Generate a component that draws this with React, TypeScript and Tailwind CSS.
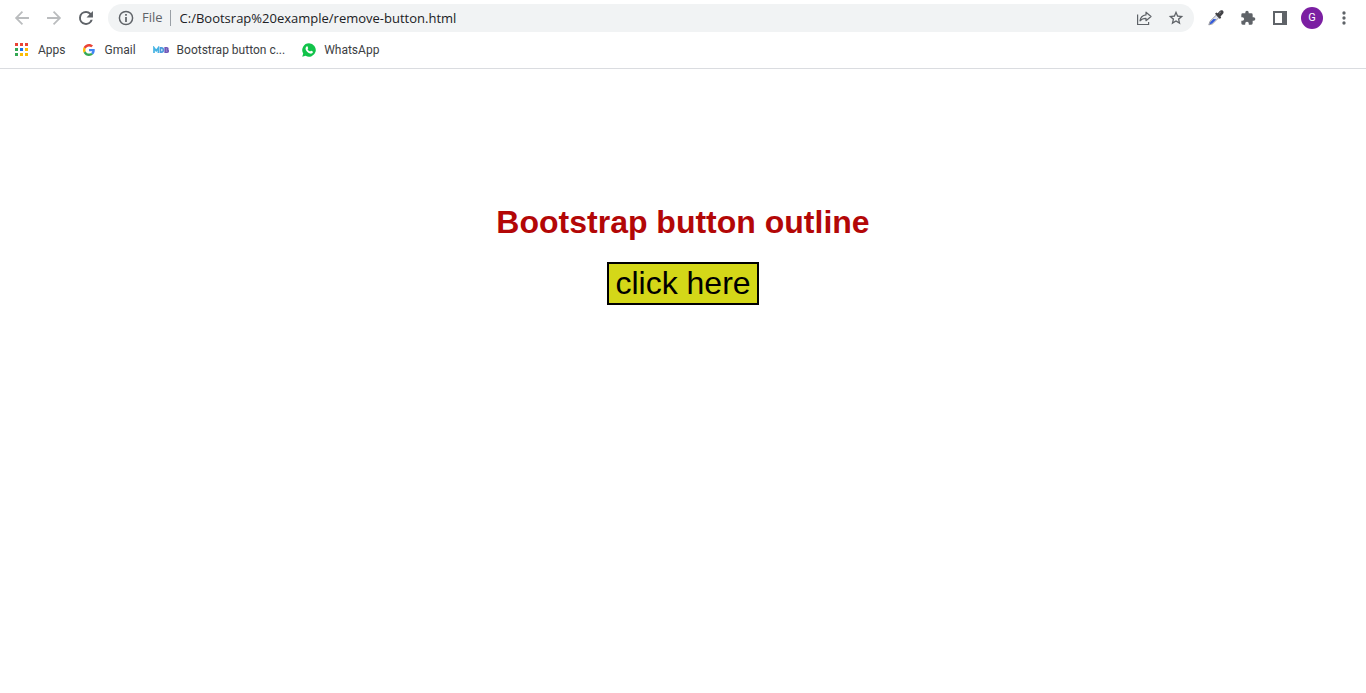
import type { ReactNode } from "react";

const iconButton = "flex h-8 w-8 shrink-0 items-center justify-center";

function Glyph({ d, className, viewBox = "0 0 24 24" }: { d: string; className: string; viewBox?: string }) {
  return (
    <svg viewBox={viewBox} fill="currentColor" className={className} aria-hidden="true">
      <path d={d} />
    </svg>
  );
}

function AppsIcon() {
  const colors = ["#ea4335", "#ea4335", "#ea4335", "#34a853", "#1a73e8", "#fbbc04", "#34a853", "#fbbc04", "#fbbc04"];
  return (
    <svg viewBox="0 0 13 14" className="h-[14px] w-[13px]" aria-hidden="true" shapeRendering="crispEdges">
      {colors.map((fill, i) => (
        <rect key={i} x={(i % 3) * 5} y={Math.floor(i / 3) * 5} width="3" height="3" fill={fill} />
      ))}
    </svg>
  );
}

function GoogleIcon() {
  return (
    <svg viewBox="0 0 48 48" className="h-3 w-3" aria-hidden="true">
      <path fill="#EA4335" d="M24 9.5c3.54 0 6.71 1.22 9.21 3.6l6.85-6.85C35.9 2.38 30.47 0 24 0 14.62 0 6.51 5.38 2.56 13.22l7.98 6.19C12.43 13.72 17.74 9.5 24 9.5z" />
      <path fill="#4285F4" d="M46.98 24.55c0-1.57-.15-3.09-.38-4.55H24v9.02h12.94c-.58 2.96-2.26 5.48-4.78 7.18l7.73 6c4.51-4.18 7.09-10.36 7.09-17.65z" />
      <path fill="#FBBC05" d="M10.53 28.59c-.48-1.45-.76-2.99-.76-4.59s.27-3.14.76-4.59l-7.98-6.19C.92 16.46 0 20.12 0 24c0 3.88.92 7.54 2.56 10.78l7.97-6.19z" />
      <path fill="#34A853" d="M24 48c6.48 0 11.93-2.13 15.89-5.81l-7.73-6c-2.15 1.45-4.92 2.3-8.16 2.3-6.26 0-11.57-4.22-13.47-9.91l-7.98 6.19C6.51 42.62 14.62 48 24 48z" />
    </svg>
  );
}

function MdbIcon() {
  return (
    <svg viewBox="0 0 16 8" className="h-2 w-4" fill="none" strokeWidth="1.7" aria-hidden="true">
      <path stroke="#45b3e3" d="M1 7V1.8l2.2 3 2.2-3V7" />
      <path stroke="#4b9bdc" d="M7.5 1.9h1c2.4 0 2.4 4.2 0 4.2h-1z" />
      <path stroke="#7158b8" d="M12.2 1.9h1.5c1.6 0 1.6 2.1 0 2.1h-1.5 1.7c1.8 0 1.8 2.2 0 2.2h-1.7z" />
    </svg>
  );
}

function WhatsAppIcon() {
  return (
    <svg viewBox="0 0 28 28" className="h-[14px] w-[14px]" aria-hidden="true">
      <path fill="#12c34a" d="M14 .5A13.5 13.5 0 0 0 2.4 20.9L.5 27.5l6.8-1.8A13.5 13.5 0 1 0 14 .5z" />
      <path fill="#fff" d="M9.1 6.8c.7-.7 1.7-.6 2 .2l1.2 2.9c.2.6-.1 1-1.3 2.4 1.2 2.2 2.8 3.7 5.2 4.8 1.3-1.6 1.6-2 2.3-1.7l2.8 1.4c.7.3.6 1.5.2 2.4-.7 1.6-3.1 2.5-5.1 1.9-4.5-1.3-7.2-4-8.8-7.7-.9-2.4-.5-4.6 1.5-6.6z" />
    </svg>
  );
}

function EyedropperIcon() {
  return (
    <svg viewBox="0 0 16 16" className="h-4 w-4" aria-hidden="true">
      <path d="M8.2 5.2 2 11.3.8 14.9l3.8-1.1L10.9 7.6z" fill="#dfe3ee" stroke="#85858b" strokeWidth=".8" />
      <path d="m5.4 8.9 2.9.4-4.2 4.1-2.5.9.8-2.4z" fill="#3158d8" />
      <path d="M7 3.8 8.4 2.6l1.3.7 2-2.4c1.1-1.1 3.4-.8 3.8.8.2.9-.1 1.7-.7 2.4l-2.3 2.3.7 1.2-1.3 1.3z" fill="#424246" />
      <path d="m11.2 3.3 1.6-1.4" stroke="#99999d" />
    </svg>
  );
}

function Bookmark({ icon, label, gap }: { icon: ReactNode; label: string; gap: string }) {
  return (
    <a href="#" className={`flex items-center whitespace-nowrap ${gap}`}>
      {icon}
      <span>{label}</span>
    </a>
  );
}

export default function App() {
  return (
    <div className="min-h-screen bg-white font-['Liberation_Sans',sans-serif]">
      <header className="border-b border-[#dadce0] font-['Open_Sans',sans-serif] text-[#3c4043]">
        <div className="flex h-9 items-center px-[6px] text-[#5f6368]">
          <button aria-label="Back" className={`${iconButton} text-[#babcbe]`}>
            <Glyph viewBox=".5 .5 23 23" className="h-5 w-5" d="M20 10.8H7.83l5.39-5.39L11.8 4l-8 8 8 8 1.41-1.41L7.83 13.2H20z" />
          </button>
          <button aria-label="Forward" className={`${iconButton} text-[#babcbe]`}>
            <Glyph viewBox=".5 .5 23 23" className="h-5 w-5" d="m12.2 4-1.41 1.41 5.38 5.39H4v2.4h12.17l-5.38 5.39L12.2 20l8-8z" />
          </button>
          <button aria-label="Reload" className={iconButton}>
            <Glyph viewBox=".5 .5 23 23" className="h-5 w-5" d="M17.65 6.35A7.96 7.96 0 0 0 12 4a8 8 0 1 0 7.73 10h-2.5A5.7 5.7 0 1 1 12 6.3c1.5 0 2.9.6 3.9 1.7L12.6 11.3H20V4z" />
          </button>
          <div className="ml-[6px] flex h-7 flex-1 items-center rounded-full bg-[#f1f3f4] pr-[2px] pl-[10px] text-[13px]">
            <button aria-label="Site information" className="flex items-center">
              <Glyph className="mr-2 h-4 w-4" d="M10.7 10.5h2.6V18h-2.6zM10.7 6h2.6v2.6h-2.6zM12 1a11 11 0 1 0 0 22 11 11 0 0 0 0-22zm0 19.8a8.8 8.8 0 1 1 0-17.6 8.8 8.8 0 0 1 0 17.6z" />
              <span>File</span>
            </button>
            <span className="mr-[9px] ml-[7px] h-4 w-px bg-[#9aa0a6]" />
            <input
              aria-label="Address"
              defaultValue="C:/Bootsrap%20example/remove-button.html"
              className="min-w-0 flex-1 bg-transparent pt-px text-[#202124] outline-none"
            />
            <button aria-label="Share" className={iconButton}>
              <svg viewBox="0 0 16 16" className="h-4 w-4" fill="none" stroke="currentColor" strokeWidth="1.2" aria-hidden="true">
                <path d="M1.6 4.5v10h11V12" />
                <path d="M10 2.2 15 6.5l-5 4.2V8.3c-2.8 0-4.6.8-6 2.6.4-3.4 2.4-5.6 6-6z" strokeLinejoin="round" />
              </svg>
            </button>
            <button aria-label="Bookmark this page" className={iconButton}>
              <Glyph viewBox="1 1 22 22" className="h-4 w-4" d="m22 9.24-7.19-.62L12 2 9.19 8.63 2 9.24l5.46 4.73L5.82 21 12 17.27 18.18 21l-1.63-7.03zM12 15.1l-3.5 2.1.9-4-3-2.6 4-.4L12 6.5l1.6 3.7 4 .4-3 2.6.9 4z" />
            </button>
          </div>
          <div className="ml-[6px] flex">
            <button aria-label="Color picker" className={iconButton}>
              <EyedropperIcon />
            </button>
            <button aria-label="Extensions" className={iconButton}>
              <Glyph className="h-4 w-4" d="M20.5 11H19V7a2 2 0 0 0-2-2h-4V3.5a2.5 2.5 0 0 0-5 0V5H4a2 2 0 0 0-2 2v3.8h1.5a2.7 2.7 0 0 1 0 5.4H2V20a2 2 0 0 0 2 2h3.8v-1.5a2.7 2.7 0 0 1 5.4 0V22H17a2 2 0 0 0 2-2v-4h1.5a2.5 2.5 0 0 0 0-5z" />
            </button>
            <button aria-label="Side panel" className={iconButton}>
              <svg viewBox="0 0 14 14" className="h-[14px] w-[14px]" fill="currentColor" aria-hidden="true">
                <path fillRule="evenodd" d="M0 0h14v14H0zM2 2v10h7V2z" />
              </svg>
            </button>
            <button aria-label="Profile" className={iconButton}>
              <span className="flex h-[22px] w-[22px] items-center justify-center rounded-full bg-[#7b1fa2] font-['Roboto',sans-serif] text-[11px] text-white">
                G
              </span>
            </button>
            <button aria-label="Menu" className={iconButton}>
              <Glyph className="h-5 w-5" d="M12 8a2 2 0 1 0 0-4 2 2 0 0 0 0 4zm0 2a2 2 0 1 0 0 4 2 2 0 0 0 0-4zm0 6a2 2 0 1 0 0 4 2 2 0 0 0 0-4z" />
            </button>
          </div>
        </div>
        <nav aria-label="Bookmarks" className="flex h-8 items-center gap-[17px] pb-1 pl-[15px] font-['Roboto',sans-serif] text-[12px]">
          <Bookmark icon={<AppsIcon />} label="Apps" gap="gap-[10px]" />
          <Bookmark icon={<GoogleIcon />} label="Gmail" gap="gap-[10px]" />
          <Bookmark icon={<MdbIcon />} label="Bootstrap button c..." gap="gap-2" />
          <Bookmark icon={<WhatsAppIcon />} label="WhatsApp" gap="gap-2" />
        </nav>
      </header>
      <main className="flex flex-col items-center gap-[21px] px-4 pt-[135px] text-[32px] leading-[37px]">
        <h1 className="font-bold text-[#b30707]">Bootstrap button outline</h1>
        <button className="border-2 border-black bg-[#d4d718] px-[6px] py-px text-black">click here</button>
      </main>
    </div>
  );
}
